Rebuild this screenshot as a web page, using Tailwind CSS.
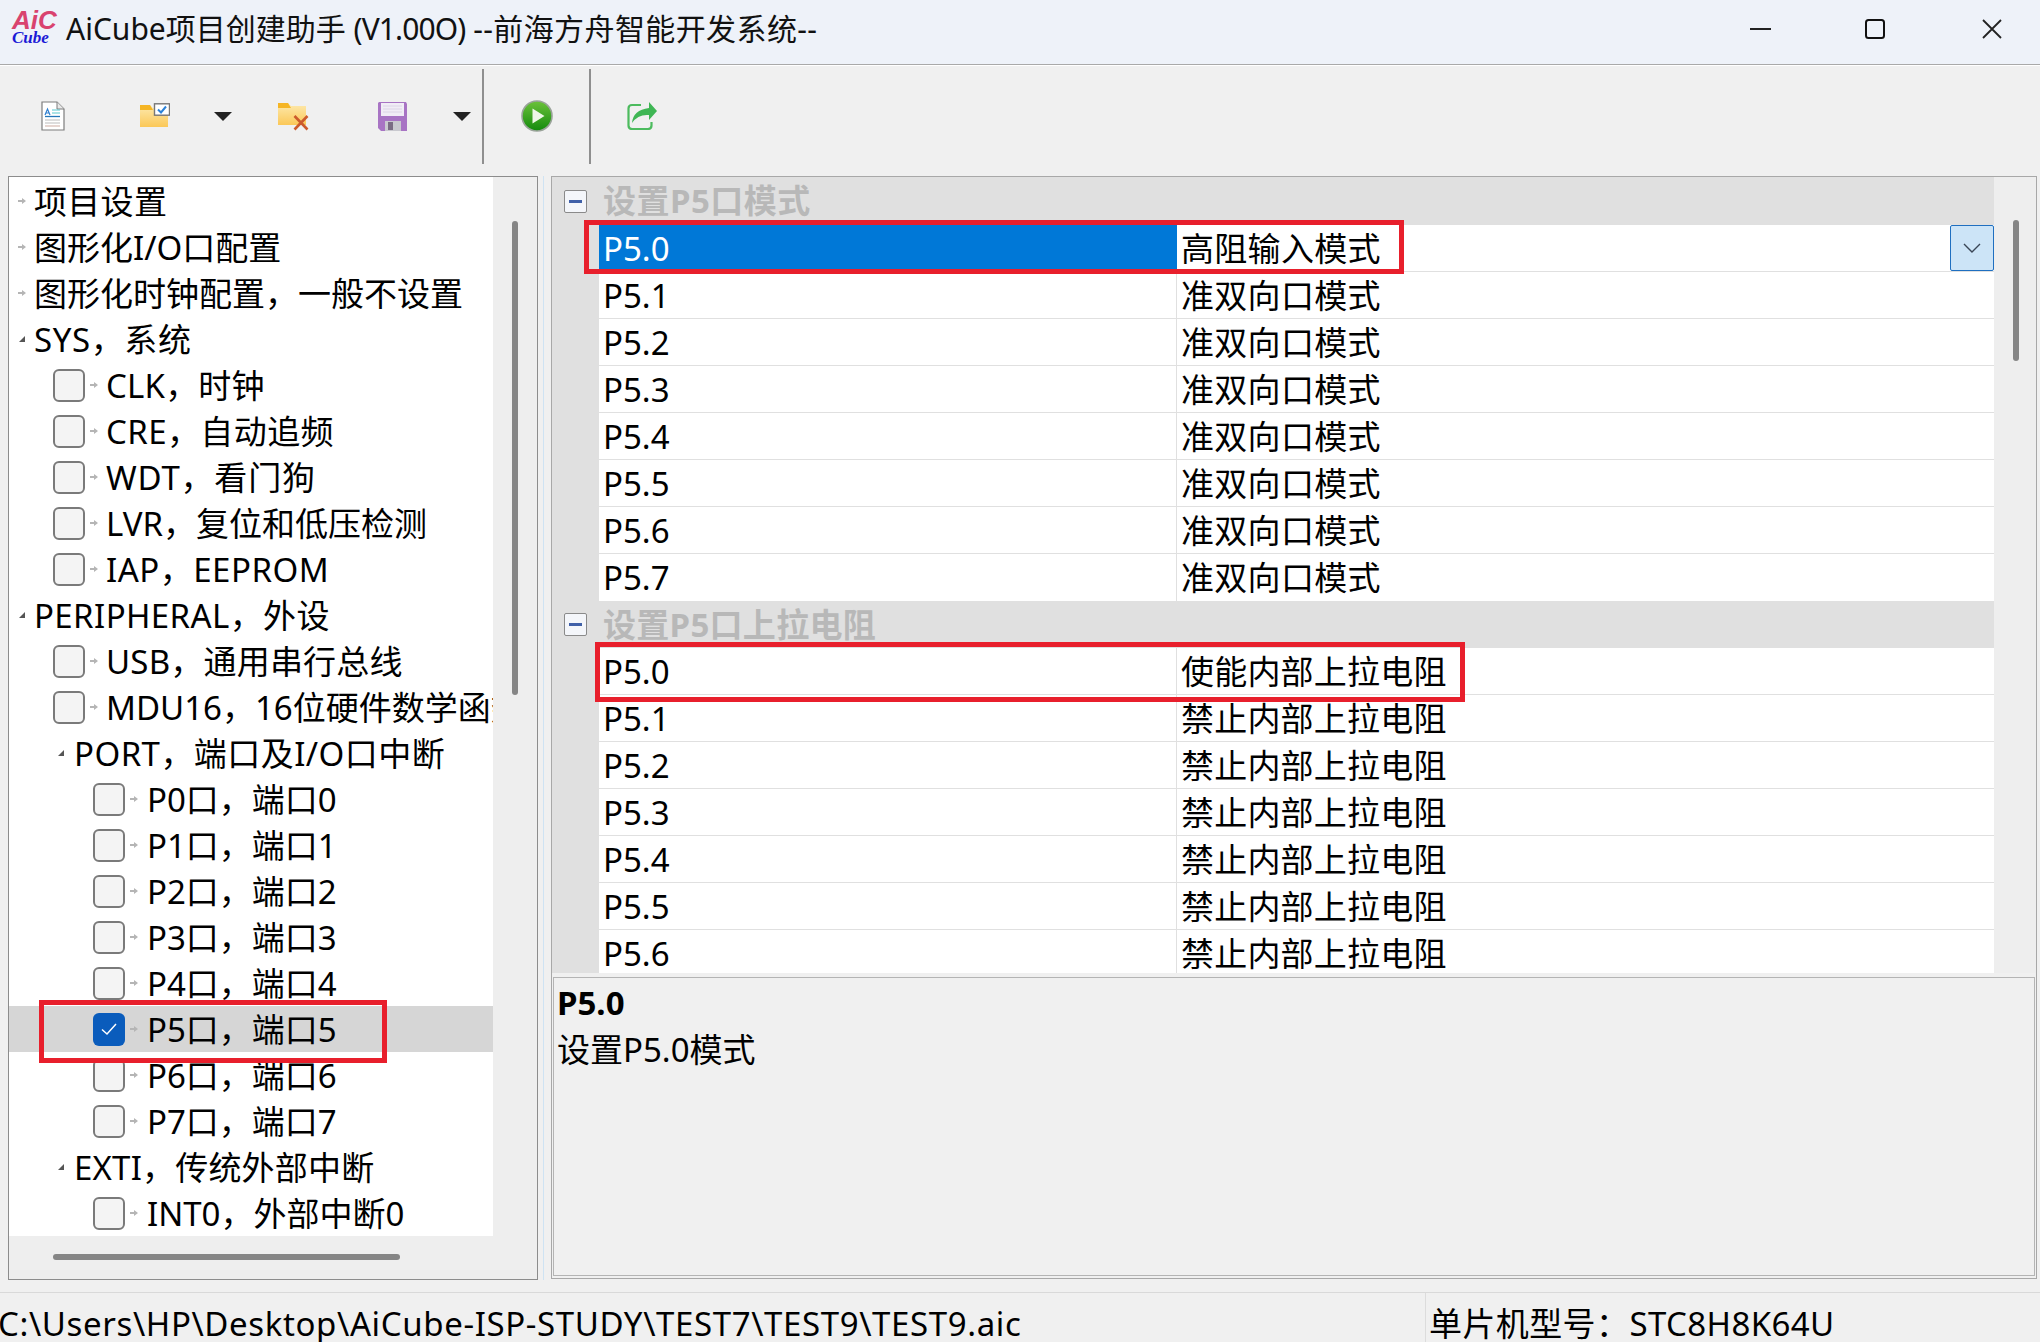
<!DOCTYPE html>
<html lang="zh">
<head>
<meta charset="utf-8">
<title>AiCube</title>
<script src="https://cdn.jsdelivr.net/npm/@tailwindcss/browser@4"></script>
</head>
<body class="m-0">
<div class="relative w-[2040px] h-[1342px] overflow-hidden flex flex-col bg-[#f0f0f0] text-black font-['Noto_Sans','Noto_Sans_CJK_SC',sans-serif] text-[33px]">

  <!-- title bar -->
  <div class="h-[65px] shrink-0 flex items-center pb-[6px] bg-[#eef2f9] border-b border-[#a9a9a9]">
    <div class="w-[66px] pl-[12px] pb-[4px] flex flex-col items-start">
      <span class="font-['Liberation_Sans',sans-serif] font-bold italic text-[26px] leading-[22px] text-[#d9436f]">AiC</span>
      <span class="font-['Liberation_Serif',serif] font-bold italic text-[17px] leading-[14px] text-[#1a1ad6]">Cube</span>
    </div>
    <div class="text-[30px] leading-[46px] whitespace-nowrap text-[#111]"><span>AiCube项目创建助手 </span><span class="tracking-[-0.9px]">(V1.00O)</span><span> </span><span class="tracking-[0.4px]">--前海方舟智能开发系统--</span></div>
    <div class="ml-auto flex items-center pr-[38px]">
      <svg class="w-[22px] h-[20px]" viewBox="0 0 22 20"><path d="M0 10H21" stroke="#222" stroke-width="2"/></svg>
      <svg class="w-[20px] h-[20px] ml-[93px]" viewBox="0 0 20 20"><rect x="1" y="1" width="18" height="18" rx="2.5" fill="none" stroke="#111" stroke-width="2"/></svg>
      <svg class="w-[20px] h-[20px] ml-[97px]" viewBox="0 0 20 20"><path d="M1 1L19 19M19 1L1 19" stroke="#222" stroke-width="1.8"/></svg>
    </div>
  </div>

  <!-- toolbar -->
  <div class="h-[111px] shrink-0 flex items-center pb-[10px] border-t border-white bg-[#f0f0f0]">
    <svg class="w-[24px] h-[30px] ml-[41px] shrink-0" viewBox="0 0 24 30"><path d="M1 1H16L23 8V29H1Z" fill="#fff" stroke="#7d7d7d" stroke-width="1.2"/><path d="M16 1V8H23" fill="#e8e8e8" stroke="#7d7d7d" stroke-width="1"/><path d="M4 14L6.500 8L9 14M5 12H8" fill="none" stroke="#2f7fd0" stroke-width="1.200"/><path d="M11 9H19M11 12H19" stroke="#58c7d0" stroke-width="1.200"/><path d="M4 15.500H19" stroke="#2377b8" stroke-width="1.300"/><path d="M4 19H19M4 22H19" stroke="#bcbcbc" stroke-width="1.200"/><path d="M4 25H19" stroke="#d6b9b0" stroke-width="1.200"/></svg>

    <svg class="w-[30px] h-[26px] ml-[75px] shrink-0" viewBox="0 0 30 26"><defs><linearGradient id="f1" x1="0" y1="0" x2="0" y2="1"><stop offset="0" stop-color="#fdeab0"/><stop offset="1" stop-color="#fbc858"/></linearGradient></defs><path d="M0 2H10L13 5H28V24H0Z" fill="url(#f1)"/><path d="M0 2H10L13 7H0Z" fill="#f5b524"/><rect x="14.500" y="0.800" width="15" height="11.400" fill="#fff" stroke="#777" stroke-width="1.400"/><path d="M18 6.500L21 9.500L26 3.500" fill="none" stroke="#2b82d8" stroke-width="2"/></svg>

    <div class="ml-[44px] w-0 h-0 shrink-0 border-x-[9px] border-x-transparent border-t-[9px] border-t-[#222]"></div>

    <svg class="w-[31px] h-[29px] ml-[46px] shrink-0" viewBox="0 0 31 29"><defs><linearGradient id="f2" x1="0" y1="0" x2="0" y2="1"><stop offset="0" stop-color="#fdeab0"/><stop offset="1" stop-color="#fbc858"/></linearGradient></defs><path d="M0 1H10L13 4H28V23H0Z" fill="url(#f2)"/><path d="M0 1H10L13 6H0Z" fill="#f5b524"/><path d="M16.500 14L29.500 27.500M29.500 14L16.500 27.500" stroke="#cc5a2c" stroke-width="2.600"/></svg>

    <svg class="w-[29px] h-[29px] ml-[69px] shrink-0" viewBox="0 0 29 29"><path d="M1 0H28L29 2V29H3L0 26V1Z" fill="#a874c4"/><path d="M3 1H26V14H3Z" fill="#f1edf6"/><path d="M5 4H24M5 7H24M5 10H24" stroke="#dcd5e6" stroke-width="1"/><path d="M7 19H23V29H7Z" fill="#c9c9cf"/><path d="M10 20H15V28H10Z" fill="#7a6c84"/></svg>

    <div class="ml-[46px] w-0 h-0 shrink-0 border-x-[9px] border-x-transparent border-t-[9px] border-t-[#222]"></div>

    <div class="ml-[11px] w-[2px] h-[95px] shrink-0 bg-[#8f8f8f]"></div>

    <svg class="w-[32px] h-[32px] ml-[37px] shrink-0" viewBox="0 0 32 32"><defs><linearGradient id="g1" x1="0" y1="0" x2="0" y2="1"><stop offset="0" stop-color="#6cc23a"/><stop offset="1" stop-color="#138a0d"/></linearGradient></defs><circle cx="16" cy="16" r="15" fill="url(#g1)" stroke="#9aa39a" stroke-width="1.600"/><path d="M11.500 8.500L23.500 16L11.500 23.500Z" fill="#eef7e6"/></svg>

    <div class="ml-[36px] w-[2px] h-[95px] shrink-0 bg-[#8f8f8f]"></div>

    <svg class="w-[30px] h-[28px] ml-[36px] shrink-0" viewBox="0 0 30 28"><path d="M14 3H5Q1.500 3 1.500 6.500V23.500Q1.500 27 5 27H21Q24.500 27 24.500 23.500V20" fill="none" stroke="#4cbb5e" stroke-width="2.200"/><path d="M22 0L30 9L22 18V13Q11 12 5 21Q6 8 22 6Z" fill="#3fb654"/></svg>
  </div>

  <!-- main -->
  <div class="flex-1 min-h-0 flex items-stretch h-[1104px]">
    <!-- tree panel -->
    <div class="ml-[8px] w-[530px] shrink-0 h-[1104px] border border-[#8c8c8c] bg-[#eeeeee] grid grid-cols-[484px_44px] grid-rows-[1059px_42px] box-border">
      <div class="bg-white overflow-hidden pt-[1px] whitespace-nowrap leading-[46px]">
        <div class="h-[46px] flex items-center pl-[9px]"><svg class="w-[8px] h-[8px] shrink-0" viewBox="0 0 8 8"><path d="M0 3H4V1L8 4L4 7V5H0Z" fill="#b5b5b5"/></svg><span class="ml-[8px] mt-[2px] tracking-[0.3px]">项目设置</span></div>
        <div class="h-[46px] flex items-center pl-[9px]"><svg class="w-[8px] h-[8px] shrink-0" viewBox="0 0 8 8"><path d="M0 3H4V1L8 4L4 7V5H0Z" fill="#b5b5b5"/></svg><span class="ml-[8px] mt-[2px]">图形化I/O口配置</span></div>
        <div class="h-[46px] flex items-center pl-[9px]"><svg class="w-[8px] h-[8px] shrink-0" viewBox="0 0 8 8"><path d="M0 3H4V1L8 4L4 7V5H0Z" fill="#b5b5b5"/></svg><span class="ml-[8px] mt-[2px]">图形化时钟配置，一般不设置</span></div>
        <div class="h-[46px] flex items-center pl-[9px]"><svg class="w-[8px] h-[8px] shrink-0" viewBox="0 0 8 8"><path d="M7 1V7H1Z" fill="#555"/></svg><span class="ml-[8px] mt-[2px] tracking-[0.6px]">SYS，系统</span></div>

        <div class="h-[46px] flex items-center pl-[44px]"><span class="w-[32px] h-[33px] shrink-0 rounded-[6px] border-2 border-[#7a7a7a] bg-[#f4f4f4]"></span><svg class="w-[8px] h-[8px] shrink-0 ml-[5px]" viewBox="0 0 8 8"><path d="M0 3H4V1L8 4L4 7V5H0Z" fill="#b5b5b5"/></svg><span class="ml-[8px] mt-[2px] tracking-[0.2px]">CLK，时钟</span></div>
        <div class="h-[46px] flex items-center pl-[44px]"><span class="w-[32px] h-[33px] shrink-0 rounded-[6px] border-2 border-[#7a7a7a] bg-[#f4f4f4]"></span><svg class="w-[8px] h-[8px] shrink-0 ml-[5px]" viewBox="0 0 8 8"><path d="M0 3H4V1L8 4L4 7V5H0Z" fill="#b5b5b5"/></svg><span class="ml-[8px] mt-[2px] tracking-[0.4px]">CRE，自动追频</span></div>
        <div class="h-[46px] flex items-center pl-[44px]"><span class="w-[32px] h-[33px] shrink-0 rounded-[6px] border-2 border-[#7a7a7a] bg-[#f4f4f4]"></span><svg class="w-[8px] h-[8px] shrink-0 ml-[5px]" viewBox="0 0 8 8"><path d="M0 3H4V1L8 4L4 7V5H0Z" fill="#b5b5b5"/></svg><span class="ml-[8px] mt-[2px] tracking-[0.8px]">WDT，看门狗</span></div>
        <div class="h-[46px] flex items-center pl-[44px]"><span class="w-[32px] h-[33px] shrink-0 rounded-[6px] border-2 border-[#7a7a7a] bg-[#f4f4f4]"></span><svg class="w-[8px] h-[8px] shrink-0 ml-[5px]" viewBox="0 0 8 8"><path d="M0 3H4V1L8 4L4 7V5H0Z" fill="#b5b5b5"/></svg><span class="ml-[8px] mt-[2px]">LVR，复位和低压检测</span></div>
        <div class="h-[46px] flex items-center pl-[44px]"><span class="w-[32px] h-[33px] shrink-0 rounded-[6px] border-2 border-[#7a7a7a] bg-[#f4f4f4]"></span><svg class="w-[8px] h-[8px] shrink-0 ml-[5px]" viewBox="0 0 8 8"><path d="M0 3H4V1L8 4L4 7V5H0Z" fill="#b5b5b5"/></svg><span class="ml-[8px] mt-[2px] tracking-[0.5px]">IAP，EEPROM</span></div>

        <div class="h-[46px] flex items-center pl-[9px]"><svg class="w-[8px] h-[8px] shrink-0" viewBox="0 0 8 8"><path d="M7 1V7H1Z" fill="#555"/></svg><span class="ml-[8px] mt-[2px] tracking-[0.4px]">PERIPHERAL，外设</span></div>

        <div class="h-[46px] flex items-center pl-[44px]"><span class="w-[32px] h-[33px] shrink-0 rounded-[6px] border-2 border-[#7a7a7a] bg-[#f4f4f4]"></span><svg class="w-[8px] h-[8px] shrink-0 ml-[5px]" viewBox="0 0 8 8"><path d="M0 3H4V1L8 4L4 7V5H0Z" fill="#b5b5b5"/></svg><span class="ml-[8px] mt-[2px] tracking-[0.2px]">USB，通用串行总线</span></div>
        <div class="h-[46px] flex items-center pl-[44px]"><span class="w-[32px] h-[33px] shrink-0 rounded-[6px] border-2 border-[#7a7a7a] bg-[#f4f4f4]"></span><svg class="w-[8px] h-[8px] shrink-0 ml-[5px]" viewBox="0 0 8 8"><path d="M0 3H4V1L8 4L4 7V5H0Z" fill="#b5b5b5"/></svg><span class="ml-[8px] mt-[2px]">MDU16，16位硬件数学函数</span></div>

        <div class="h-[46px] flex items-center pl-[48px]"><svg class="w-[8px] h-[8px] shrink-0" viewBox="0 0 8 8"><path d="M7 1V7H1Z" fill="#555"/></svg><span class="ml-[9px] mt-[2px] tracking-[0.45px]">PORT，端口及I/O口中断</span></div>

        <div class="h-[46px] flex items-center pl-[84px]"><span class="w-[32px] h-[33px] shrink-0 rounded-[6px] border-2 border-[#7a7a7a] bg-[#f4f4f4]"></span><svg class="w-[8px] h-[8px] shrink-0 ml-[5px]" viewBox="0 0 8 8"><path d="M0 3H4V1L8 4L4 7V5H0Z" fill="#b5b5b5"/></svg><span class="ml-[9px] mt-[2px]">P0口，端口0</span></div>
        <div class="h-[46px] flex items-center pl-[84px]"><span class="w-[32px] h-[33px] shrink-0 rounded-[6px] border-2 border-[#7a7a7a] bg-[#f4f4f4]"></span><svg class="w-[8px] h-[8px] shrink-0 ml-[5px]" viewBox="0 0 8 8"><path d="M0 3H4V1L8 4L4 7V5H0Z" fill="#b5b5b5"/></svg><span class="ml-[9px] mt-[2px]">P1口，端口1</span></div>
        <div class="h-[46px] flex items-center pl-[84px]"><span class="w-[32px] h-[33px] shrink-0 rounded-[6px] border-2 border-[#7a7a7a] bg-[#f4f4f4]"></span><svg class="w-[8px] h-[8px] shrink-0 ml-[5px]" viewBox="0 0 8 8"><path d="M0 3H4V1L8 4L4 7V5H0Z" fill="#b5b5b5"/></svg><span class="ml-[9px] mt-[2px]">P2口，端口2</span></div>
        <div class="h-[46px] flex items-center pl-[84px]"><span class="w-[32px] h-[33px] shrink-0 rounded-[6px] border-2 border-[#7a7a7a] bg-[#f4f4f4]"></span><svg class="w-[8px] h-[8px] shrink-0 ml-[5px]" viewBox="0 0 8 8"><path d="M0 3H4V1L8 4L4 7V5H0Z" fill="#b5b5b5"/></svg><span class="ml-[9px] mt-[2px]">P3口，端口3</span></div>
        <div class="h-[46px] flex items-center pl-[84px]"><span class="w-[32px] h-[33px] shrink-0 rounded-[6px] border-2 border-[#7a7a7a] bg-[#f4f4f4]"></span><svg class="w-[8px] h-[8px] shrink-0 ml-[5px]" viewBox="0 0 8 8"><path d="M0 3H4V1L8 4L4 7V5H0Z" fill="#b5b5b5"/></svg><span class="ml-[9px] mt-[2px]">P4口，端口4</span></div>
        <div class="h-[46px] flex items-center pl-[84px] bg-[#d6d6d6]"><span class="w-[32px] h-[33px] shrink-0 rounded-[6px] bg-[#0a5cbc] flex items-center justify-center"><svg class="w-[18px] h-[18px]" viewBox="0 0 18 18"><path d="M2 9.500L7 14L16 4" fill="none" stroke="#fff" stroke-width="1.500"/></svg></span><svg class="w-[8px] h-[8px] shrink-0 ml-[5px]" viewBox="0 0 8 8"><path d="M0 3H4V1L8 4L4 7V5H0Z" fill="#b5b5b5"/></svg><span class="ml-[9px] mt-[2px]">P5口，端口5</span></div>
        <div class="h-[46px] flex items-center pl-[84px]"><span class="w-[32px] h-[33px] shrink-0 rounded-[6px] border-2 border-[#7a7a7a] bg-[#f4f4f4]"></span><svg class="w-[8px] h-[8px] shrink-0 ml-[5px]" viewBox="0 0 8 8"><path d="M0 3H4V1L8 4L4 7V5H0Z" fill="#b5b5b5"/></svg><span class="ml-[9px] mt-[2px]">P6口，端口6</span></div>
        <div class="h-[46px] flex items-center pl-[84px]"><span class="w-[32px] h-[33px] shrink-0 rounded-[6px] border-2 border-[#7a7a7a] bg-[#f4f4f4]"></span><svg class="w-[8px] h-[8px] shrink-0 ml-[5px]" viewBox="0 0 8 8"><path d="M0 3H4V1L8 4L4 7V5H0Z" fill="#b5b5b5"/></svg><span class="ml-[9px] mt-[2px]">P7口，端口7</span></div>

        <div class="h-[46px] flex items-center pl-[48px]"><svg class="w-[8px] h-[8px] shrink-0" viewBox="0 0 8 8"><path d="M7 1V7H1Z" fill="#555"/></svg><span class="ml-[9px] mt-[2px] tracking-[0.2px]">EXTI，传统外部中断</span></div>

        <div class="h-[46px] flex items-center pl-[84px]"><span class="w-[32px] h-[33px] shrink-0 rounded-[6px] border-2 border-[#7a7a7a] bg-[#f4f4f4]"></span><svg class="w-[8px] h-[8px] shrink-0 ml-[5px]" viewBox="0 0 8 8"><path d="M0 3H4V1L8 4L4 7V5H0Z" fill="#b5b5b5"/></svg><span class="ml-[9px] mt-[2px]">INT0，外部中断0</span></div>
      </div>
      <!-- vertical scrollbar -->
      <div class="pt-[44px] pl-[19px]"><div class="w-[6px] h-[474px] rounded-full bg-[#858585]"></div></div>
      <!-- horizontal scrollbar -->
      <div class="pt-[18px] pl-[44px]"><div class="h-[6px] w-[347px] rounded-full bg-[#858585]"></div></div>
      <div></div>
    </div>

    <!-- splitter -->
    <div class="w-[13px] shrink-0 relative"><div class="ml-[5px] w-[1px] h-[1104px] bg-[#cfe3f3]"></div></div>

    <!-- right panel -->
    <div class="w-[1486px] shrink-0 h-[1103px] border border-[#a8a8a8] bg-[#f0f0f0] flex flex-col box-border whitespace-nowrap leading-[46px]">
      <div class="h-[796px] shrink-0 flex overflow-hidden">
        <div class="w-[1442px] shrink-0 overflow-hidden leading-[48px]">
          <div class="h-[48px] bg-[#e0e0e0] flex items-center pl-[12px]"><span class="w-[23px] h-[23px] shrink-0 rounded-[2px] border border-[#8a8a8a] bg-[#f4f6fa] flex items-center justify-center"><span class="w-[13px] h-[3px] bg-[#4060a8]"></span></span><span class="ml-[16px] font-bold text-[#b8b8b8] tracking-[0.5px]">设置P5口模式</span></div>

          <div class="h-[47px] flex bg-white"><div class="w-[47px] shrink-0 bg-[#e0e0e0]"></div><div class="w-[578px] shrink-0 h-[46px] bg-[#0078d7] text-white pl-[4px]">P5.0</div><div class="flex-1 flex justify-between border-b border-[#e0e0e0] pl-[4px]"><span class="tracking-[0.3px]">高阻输入模式</span><span class="w-[44px] h-[46px] rounded-[2px] border border-[#1f6fc0] bg-[#cce4f7] flex items-center justify-center"><svg class="w-[18px] h-[10px]" viewBox="0 0 18 10"><path d="M1 1L9 9L17 1" fill="none" stroke="#3a4656" stroke-width="1.400"/></svg></span></div></div>
          <div class="h-[47px] flex bg-white"><div class="w-[47px] shrink-0 bg-[#e0e0e0]"></div><div class="w-[578px] shrink-0 border-b border-r border-[#e0e0e0] pl-[4px]">P5.1</div><div class="flex-1 border-b border-[#e0e0e0] pl-[4px] tracking-[0.3px]">准双向口模式</div></div>
          <div class="h-[47px] flex bg-white"><div class="w-[47px] shrink-0 bg-[#e0e0e0]"></div><div class="w-[578px] shrink-0 border-b border-r border-[#e0e0e0] pl-[4px]">P5.2</div><div class="flex-1 border-b border-[#e0e0e0] pl-[4px] tracking-[0.3px]">准双向口模式</div></div>
          <div class="h-[47px] flex bg-white"><div class="w-[47px] shrink-0 bg-[#e0e0e0]"></div><div class="w-[578px] shrink-0 border-b border-r border-[#e0e0e0] pl-[4px]">P5.3</div><div class="flex-1 border-b border-[#e0e0e0] pl-[4px] tracking-[0.3px]">准双向口模式</div></div>
          <div class="h-[47px] flex bg-white"><div class="w-[47px] shrink-0 bg-[#e0e0e0]"></div><div class="w-[578px] shrink-0 border-b border-r border-[#e0e0e0] pl-[4px]">P5.4</div><div class="flex-1 border-b border-[#e0e0e0] pl-[4px] tracking-[0.3px]">准双向口模式</div></div>
          <div class="h-[47px] flex bg-white"><div class="w-[47px] shrink-0 bg-[#e0e0e0]"></div><div class="w-[578px] shrink-0 border-b border-r border-[#e0e0e0] pl-[4px]">P5.5</div><div class="flex-1 border-b border-[#e0e0e0] pl-[4px] tracking-[0.3px]">准双向口模式</div></div>
          <div class="h-[47px] flex bg-white"><div class="w-[47px] shrink-0 bg-[#e0e0e0]"></div><div class="w-[578px] shrink-0 border-b border-r border-[#e0e0e0] pl-[4px]">P5.6</div><div class="flex-1 border-b border-[#e0e0e0] pl-[4px] tracking-[0.3px]">准双向口模式</div></div>
          <div class="h-[47px] flex bg-white"><div class="w-[47px] shrink-0 bg-[#e0e0e0]"></div><div class="w-[578px] shrink-0 border-r border-[#e0e0e0] pl-[4px]">P5.7</div><div class="flex-1 pl-[4px] tracking-[0.3px]">准双向口模式</div></div>

          <div class="h-[47px] bg-[#e0e0e0] flex items-center pl-[12px]"><span class="w-[23px] h-[23px] shrink-0 rounded-[2px] border border-[#8a8a8a] bg-[#f4f6fa] flex items-center justify-center"><span class="w-[13px] h-[3px] bg-[#4060a8]"></span></span><span class="ml-[16px] font-bold text-[#b8b8b8] tracking-[0.3px]">设置P5口上拉电阻</span></div>

          <div class="h-[47px] flex bg-white"><div class="w-[47px] shrink-0 bg-[#e0e0e0]"></div><div class="w-[578px] shrink-0 border-b border-r border-[#e0e0e0] pl-[4px]">P5.0</div><div class="flex-1 border-b border-[#e0e0e0] pl-[4px] tracking-[0.2px]">使能内部上拉电阻</div></div>
          <div class="h-[47px] flex bg-white"><div class="w-[47px] shrink-0 bg-[#e0e0e0]"></div><div class="w-[578px] shrink-0 border-b border-r border-[#e0e0e0] pl-[4px]">P5.1</div><div class="flex-1 border-b border-[#e0e0e0] pl-[4px] tracking-[0.2px]">禁止内部上拉电阻</div></div>
          <div class="h-[47px] flex bg-white"><div class="w-[47px] shrink-0 bg-[#e0e0e0]"></div><div class="w-[578px] shrink-0 border-b border-r border-[#e0e0e0] pl-[4px]">P5.2</div><div class="flex-1 border-b border-[#e0e0e0] pl-[4px] tracking-[0.2px]">禁止内部上拉电阻</div></div>
          <div class="h-[47px] flex bg-white"><div class="w-[47px] shrink-0 bg-[#e0e0e0]"></div><div class="w-[578px] shrink-0 border-b border-r border-[#e0e0e0] pl-[4px]">P5.3</div><div class="flex-1 border-b border-[#e0e0e0] pl-[4px] tracking-[0.2px]">禁止内部上拉电阻</div></div>
          <div class="h-[47px] flex bg-white"><div class="w-[47px] shrink-0 bg-[#e0e0e0]"></div><div class="w-[578px] shrink-0 border-b border-r border-[#e0e0e0] pl-[4px]">P5.4</div><div class="flex-1 border-b border-[#e0e0e0] pl-[4px] tracking-[0.2px]">禁止内部上拉电阻</div></div>
          <div class="h-[47px] flex bg-white"><div class="w-[47px] shrink-0 bg-[#e0e0e0]"></div><div class="w-[578px] shrink-0 border-b border-r border-[#e0e0e0] pl-[4px]">P5.5</div><div class="flex-1 border-b border-[#e0e0e0] pl-[4px] tracking-[0.2px]">禁止内部上拉电阻</div></div>
          <div class="h-[47px] flex bg-white"><div class="w-[47px] shrink-0 bg-[#e0e0e0]"></div><div class="w-[578px] shrink-0 border-r border-[#e0e0e0] pl-[4px]">P5.6</div><div class="flex-1 pl-[4px] tracking-[0.2px]">禁止内部上拉电阻</div></div>
        </div>
        <div class="flex-1 bg-[#eeeeee] pt-[43px] pl-[19px]"><div class="w-[6px] h-[141px] rounded-full bg-[#858585]"></div></div>
      </div>
      <div class="mt-[4px] mx-[1px] h-[299px] border border-[#b4b4b4] pl-[3px] pt-[2px]">
        <div class="font-bold">P5.0</div>
        <div class="mt-[1px]">设置P5.0模式</div>
      </div>
    </div>
  </div>

  <!-- status bar -->
  <div class="mt-[12px] h-[50px] shrink-0 border-t border-[#d9d9d9] flex overflow-hidden whitespace-nowrap leading-[46px] pt-[8px]">
    <div class="w-[1425px] shrink-0 -ml-[2px] tracking-[0.62px]">C:\Users\HP\Desktop\AiCube-ISP-STUDY\TEST7\TEST9\TEST9.aic</div>
    <div class="border-l border-[#dcdcdc] pl-[3px] -mt-[8px] pt-[8px] ml-[2px] tracking-[0.4px]">单片机型号：STC8H8K64U</div>
  </div>

  <!-- red annotation boxes -->
  <div class="absolute left-[39px] top-[1000px] w-[348px] h-[63px] border-[5px] border-[#e81f2c]"></div>
  <div class="absolute left-[584px] top-[220px] w-[820px] h-[54px] border-[5px] border-[#e81f2c]"></div>
  <div class="absolute left-[595px] top-[642px] w-[870px] h-[60px] border-[5px] border-[#e81f2c]"></div>
</div>
</body>
</html>
